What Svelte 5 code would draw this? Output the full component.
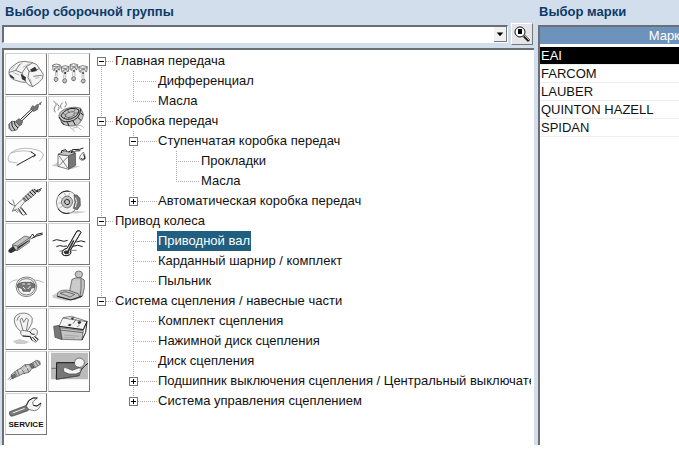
<script lang="ts">
	type Shape = [cls: string, d: string];
	type Icon = { name: string; box: string; shapes: Shape[]; caption?: string };
	type TreeNode = { label: string; open?: boolean; children?: TreeNode[] };

	const icons: Icon[] = [
		{
			name: 'Кузов',
			box: '18 27 120 117',
			shapes: [
				['pale', 'M27 86 Q25 70 42 61 Q52 49 72 49 L94 52 Q112 55 118 70 L130 88 Q130 103 116 113 L98 125 Q85 122 78 112 L64 111 L44 105 Q29 99 27 86Z'],
				['line', 'M28 82 L47 76 L60 57 M47 76 L66 84 L79 65 L98 53 M66 84 L78 112 M79 65 L87 79 L106 78 L118 70 M87 79 L84 98 L98 125 M100 94 L125 91'],
				['ink', 'M90 74 L105 65 L112 76 L96 81Z M62 86 L78 97 L76 108 L66 103Z M29 87 L44 99 L41 102 L31 96Z'],
				['thin', 'M34 75 L45 64 M52 66 L67 53 M40 83 L58 90 M69 67 L88 56 M90 101 L94 114 M105 100 L118 98']
			]
		},
		{
			name: 'Двигатель',
			box: '147 27 120 117',
			shapes: [
				['pale', 'M158 60 Q169 54 181 60 L179 75 L176 75 L174 68 L164 70 L163 77 L159 75Z M184 65 Q195 59 207 65 L205 80 L202 80 L200 73 L190 75 L189 82 L185 80Z M210 59 Q221 53 233 59 L231 74 L228 74 L226 67 L216 69 L215 76 L211 74Z M236 65 Q248 59 262 65 L260 80 L257 80 L254 73 L243 75 L242 82 L238 80Z'],
				['thin', 'M167 71 L166 95 M172 71 L171 95 M193 76 L191 99 M198 76 L197 99 M219 70 L218 93 M224 70 L225 94 M246 76 L246 100 M251 76 L252 100'],
				['line', 'M158 63 Q168 68 180 63 M184 68 Q195 73 206 68 M210 62 Q221 67 232 62 M236 68 Q248 73 262 68'],
				['mid', 'M164 98 Q173 94 174 102 Q173 112 165 109 Q160 104 164 98Z M190 102 Q199 98 200 107 Q199 116 191 114 Q185 108 190 102Z M217 96 Q226 92 227 101 Q225 110 218 107 Q212 103 217 96Z M246 103 Q255 99 256 107 Q253 117 247 114 Q240 109 246 103Z'],
				['ink', 'M168 76 H172 V82 H168Z M193 81 H198 V87 H193Z M220 75 H224 V81 H220Z M247 81 H251 V87 H247Z']
			]
		},
		{
			name: 'Привод',
			box: '18 156 120 117',
			shapes: [
				['heavy', 'M61 224 L100 187 M65 228 L104 191 M113 182 L125 171'],
				['dark', 'M92 190 L98 182 L104 185 L112 178 L115 184 L113 193 L104 198 L99 199Z M47 229 L57 221 L68 229 L64 240 L55 243Z'],
				['mid', 'M27 237 L35 229 L46 229 L58 242 L50 255 L35 258 L27 250Z'],
				['heavy', 'M35 229 Q33 244 45 256 M43 229 Q42 240 54 249'],
				['line', 'M27 237 Q27 249 35 258 M120 173 L122 180']
			]
		},
		{
			name: 'Сцепление',
			box: '147 156 120 117',
			shapes: [
				['mid', 'M177 216 Q175 202 193 193 Q220 182 242 190 L250 207 Q249 228 232 240 Q206 248 187 236Z'],
				['heavy', 'M177 216 Q185 233 207 230 Q240 225 242 192 M183 213 Q188 198 210 191 Q229 187 237 195 Q236 214 212 222 Q194 226 183 213Z'],
				['line', 'M195 213 Q200 200 220 200 Q229 207 214 216 Q202 220 195 213Z M187 204 L198 210 M202 194 L207 203 M226 191 L222 200 M237 202 L226 205 M229 216 L220 211 M205 225 L207 216 M191 219 L199 213'],
				['heavy', 'M184 230 L193 240 M202 232 L207 243 M219 228 L226 240 M234 218 L243 226 M242 204 L250 210'],
				['line', 'M166 202 Q159 193 165 185 Q174 177 160 168 M174 196 Q182 184 170 175 M185 191 Q177 182 188 173 M194 187 Q204 180 196 169'],
				['thin', 'M218 250 Q233 242 243 255 M228 245 Q242 236 251 248 M210 248 Q219 250 224 260']
			]
		},
		{
			name: 'Стеклоочиститель',
			box: '18 12 120 117',
			shapes: [
				['thin', 'M27 80 Q20 69 32 54 Q57 35 93 41 Q126 46 130 59 Q129 71 117 79 M32 54 Q69 42 98 52 M27 80 L52 84'],
				['heavy', 'M50 91 L106 60 M92 50 L107 60 L100 66']
			]
		},
		{
			name: 'Масла и жидкости',
			box: '147 12 120 117',
			shapes: [
				['shade', 'M155 92 L175 82 L222 92 L242 94 L215 102Z'],
				['pale', 'M174 58 L206 62 L206 103 L174 94Z'],
				['dark', 'M206 62 L226 54 L227 91 L206 103Z'],
				['mid', 'M174 58 L193 48 L226 54 L206 62Z'],
				['line', 'M177 62 L203 99 M203 66 L177 92'],
				['heavy', 'M184 54 L185 47 L197 44 L201 50 M205 51 L213 47 L222 51'],
				['heavy', 'M214 54 L217 44 L239 43 L250 39 M222 52 L227 48 L241 47'],
				['pale', 'M250 51 Q237 64 238 71 Q243 78 252 75 Q260 68 250 51Z'],
				['heavy', 'M242 70 Q247 76 255 70 L251 58']
			]
		},
		{
			name: 'Амортизация',
			box: '18 141 120 117',
			shapes: [
				['mid', 'M68 191 L98 163 L108 171 L113 163 L104 179 L75 201Z'],
				['heavy', 'M76 182 L86 194 M82 176 L94 188 M89 170 L101 182 M96 165 L108 177 M102 162 L114 171 M70 188 L80 198'],
				['heavy', 'M109 169 L125 160 M114 172 L123 164'],
				['pale', 'M50 208 L68 192 L75 199 L60 218 L78 237 L70 241 L50 223 L37 229 L43 216Z'],
				['line', 'M24 197 L32 207 L47 213 M38 194 L44 209 M27 202 L37 209 M43 224 L54 233'],
				['heavy', 'M55 220 L67 239 M63 217 L80 239']
			]
		},
		{
			name: 'Тормоза',
			box: '147 141 120 117',
			shapes: [
				['shade', 'M189 229 L228 228 L261 230 L228 236Z'],
				['pale', 'M200 168 Q226 167 232 200 Q230 235 202 236 Q171 234 169 201 Q173 170 200 168Z'],
				['heavy', 'M176 181 Q188 165 208 169 M174 221 Q187 240 208 234'],
				['mid', 'M201 183 Q216 185 218 200 Q215 218 201 219 Q186 216 184 201 Q187 185 201 183Z'],
				['heavy', 'M200 193 Q209 193 209 202 Q207 211 199 209 Q192 204 194 197Z'],
				['thin', 'M175 204 L184 204 M178 186 L188 192 M192 173 L197 182 M210 174 L206 182 M178 219 L188 213'],
				['dark', 'M222 180 L231 180 L240 190 L241 212 L232 224 L220 220 L225 202Z'],
				['white', 'M226 188 L230 200 L226 216']
			]
		},
		{
			name: 'Выпуск',
			box: '18 12 120 117',
			shapes: [
				['mid', 'M37 74 L74 48 L91 52 L88 67 L52 92 L38 86Z'],
				['line', 'M38 75 L53 78 L88 54 M53 78 L52 92 M38 86 L26 91 L30 98 L49 90'],
				['ink', 'M27 88 L40 78 L48 91 L34 99 L25 96Z M54 80 L87 60 L86 64 L54 87Z'],
				['heavy', 'M90 53 Q95 45 98 42 L104 52 L110 43 L128 39 M94 56 L107 49 L128 43']
			]
		},
		{
			name: 'Охлаждение',
			box: '147 12 120 117',
			shapes: [
				['pale', 'M231 33 Q240 29 243 37 L211 91 Q217 104 201 107 Q183 108 187 94 Q193 85 201 85Z'],
				['heavy', 'M231 33 Q240 29 243 37 L211 91 Q217 104 201 107 Q183 108 187 94 Q193 85 201 85Z'],
				['ink', 'M191 95 Q196 90 202 92 L219 60 L223 62 L207 94 Q211 101 201 103 Q191 102 191 95Z'],
				['heavy', 'M158 63 Q169 56 180 61 Q192 67 203 61 M229 66 Q243 59 256 66 M169 80 Q179 74 190 79 L201 78 M219 79 Q232 72 248 80'],
				['line', 'M178 94 L190 91 M213 91 L230 91']
			]
		},
		{
			name: 'Рулевое управление',
			box: '18 141 120 117',
			shapes: [
				['thin', 'M28 190 Q39 178 56 180 M102 180 Q119 180 131 188'],
				['pale', 'M79 171 Q107 171 110 200 Q107 228 79 230 Q51 228 48 200 Q51 172 79 171Z'],
				['line', 'M79 176 Q102 176 105 200 Q103 223 79 225 Q56 223 53 200 Q56 176 79 176Z'],
				['dark', 'M53 193 L67 187 L93 187 L105 194 L104 202 L93 205 L90 214 L69 214 L65 205 L53 202Z'],
				['white', 'M67 192 L75 192 M82 192 L91 192 M69 201 L76 208 M83 207 L92 198']
			]
		},
		{
			name: 'Салон',
			box: '147 141 120 117',
			shapes: [
				['shade', 'M157 226 L180 216 L229 237 L198 243 L159 233Z'],
				['line', 'M233 172 L231 180 M241 172 L241 180'],
				['mid', 'M236 153 Q247 153 248 163 Q247 174 236 174 Q226 173 225 163 Q226 153 236 153Z'],
				['mid', 'M216 178 Q227 171 243 174 L253 180 Q256 203 248 226 L240 233 L208 216Z'],
				['shade', 'M219 182 L240 181 L238 218 L213 210Z'],
				['mid', 'M173 218 Q184 208 206 211 L234 221 L240 232 Q226 240 212 239 L172 229Z'],
				['line', 'M243 176 Q245 206 240 231 M180 220 L196 215 L224 223 L211 231Z'],
				['heavy', 'M172 229 L212 240 L247 228']
			]
		},
		{
			name: 'Освещение',
			box: '18 27 120 117',
			shapes: [
				['shade', 'M38 124 L59 117 L88 125 L75 132 L49 132Z'],
				['pale', 'M44 69 Q38 47 61 40 Q88 36 97 55 Q99 69 88 84 L77 99 L61 93 Q48 84 44 69Z'],
				['line', 'M70 95 L60 59 L66 54 L71 67 L79 54 L85 59 L79 92 M51 62 Q52 51 61 47'],
				['pale', 'M62 95 Q66 88 74 92 L90 95 Q98 82 106 86 Q117 92 111 103 L106 109 L116 118 L107 127 L96 121 L92 109 L68 108 Q60 103 62 95Z'],
				['heavy', 'M68 108 L90 110 L96 121 M90 95 Q92 105 104 103 M97 111 L109 124 M103 109 L114 119']
			]
		},
		{
			name: 'Электрика',
			box: '147 27 120 117',
			shapes: [
				['dark', 'M161 79 L178 76 L186 119 L165 112Z'],
				['pale', 'M177 79 L189 53 L214 49 L261 64 L250 89Z'],
				['mid', 'M180 83 L250 92 L246 120 L187 118Z'],
				['heavy', 'M177 79 L250 89 L261 64 L257 97 L246 120'],
				['line', 'M189 54 L260 65 M181 90 L249 98'],
				['ink', 'M202 76 L209 71 L215 74 L210 79Z M232 65 L241 63 L244 69 L236 73Z M212 53 L224 52 L217 60Z'],
				['line', 'M219 71 L228 58 M231 81 L239 75'],
				['thin', 'M193 105 L238 109 M193 112 L225 114']
			]
		},
		{
			name: 'Зажигание',
			box: '18 156 120 117',
			shapes: [
				['mid', 'M33 225 L50 211 L61 205 L75 194 L91 193 L109 181 L119 184 L121 193 L106 203 L97 204 L87 217 L67 222 L53 229 L37 236Z'],
				['line', 'M24 239 L37 225 M29 240 L39 233 M44 215 L52 229 M51 210 L58 225 M63 205 L74 221 M75 194 L87 216 M91 193 L98 204 M98 188 L106 203 M105 184 L113 197 M112 182 L120 193'],
				['dark', 'M35 228 L44 222 L47 229 L38 236Z M88 194 L95 190 L102 202 L96 205Z'],
				['white', 'M58 214 L68 208 M75 206 L86 201']
			]
		},
		{
			name: 'Навесное',
			box: '147 156 120 117',
			shapes: [
				['backdrop', 'M153 158 H264 V238 H153Z'],
				['panel', 'M170 188 L224 188 L244 210 L238 227 L169 238Z'],
				['pale', 'M237 174 Q252 175 253 188 Q252 201 238 202 Q224 201 223 188 Q224 175 237 174Z'],
				['pale', 'M190 207 Q193 198 202 205 L217 211 L236 204 L247 205 L241 216 L228 222 L207 222 L192 216Z'],
				['line', 'M154 205 L168 205 M169 238 L238 227'],
				['heavy', 'M169 238 L170 188 L224 188 M240 212 L255 197 L264 190']
			]
		},
		{
			name: 'Сервис',
			box: '18 282 120 72',
			caption: 'SERVICE',
			shapes: [
				['dark', 'M29 335 L79 316 L90 324 L84 332 L39 348 Q26 351 29 335Z'],
				['pale', 'M78 317 L86 302 Q99 290 112 294 L98 306 L100 316 L111 318 L123 309 Q119 331 103 332 L87 329Z'],
				['heavy', 'M79 317 L86 302 Q99 290 112 294 M100 316 L111 318 L123 309'],
				['white', 'M38 339 L74 325']
			]
		}
	];

	const tree: TreeNode[] = [
		{
			label: 'Главная передача',
			open: true,
			children: [{ label: 'Дифференциал' }, { label: 'Масла' }]
		},
		{
			label: 'Коробка передач',
			open: true,
			children: [
				{
					label: 'Ступенчатая коробка передач',
					open: true,
					children: [{ label: 'Прокладки' }, { label: 'Масла' }]
				},
				{ label: 'Автоматическая коробка передач', open: false }
			]
		},
		{
			label: 'Привод колеса',
			open: true,
			children: [
				{ label: 'Приводной вал' },
				{ label: 'Карданный шарнир / комплект' },
				{ label: 'Пыльник' }
			]
		},
		{
			label: 'Система сцепления / навесные части',
			open: true,
			children: [
				{ label: 'Комплект сцепления' },
				{ label: 'Нажимной диск сцепления' },
				{ label: 'Диск сцепления' },
				{ label: 'Подшипник выключения сцепления / Центральный выключатель', open: false },
				{ label: 'Система управления сцеплением', open: false }
			]
		}
	];

	const brands = ['EAI', 'FARCOM', 'LAUBER', 'QUINTON HAZELL', 'SPIDAN'];

	let selectedGroup = $state('Приводной вал');
	let selectedBrand = $state('EAI');
</script>

{#snippet branch(nodes: TreeNode[])}
	<ul>
		{#each nodes as node}
			<li>
				<div class="row">
					{#if node.open !== undefined}
						<button class="toggle" aria-label={node.label} aria-expanded={node.open}>
							<svg viewBox="0 0 9 9" width="9" height="9">
								<path d={node.open ? 'M2 4.5H7' : 'M2 4.5H7M4.5 2V7'} />
							</svg>
						</button>
					{/if}
					<span class="stub"></span>
					<button
						class="label"
						class:selected={node.label === selectedGroup}
						onclick={() => (selectedGroup = node.label)}>{node.label}</button
					>
				</div>
				{#if node.children}
					{@render branch(node.children)}
				{/if}
			</li>
		{/each}
	</ul>
{/snippet}

<main>
	<section class="groups">
		<h2><label for="group">Выбор сборочной группы</label></h2>
		<div class="search">
			<div class="combo">
				<select id="group"><option value=""></option></select>
				<svg class="arrow" viewBox="0 0 13 15" width="13" height="15" aria-hidden="true">
					<path d="M3 6H10L6.5 10Z" />
				</svg>
			</div>
			<button class="find" aria-label="Найти">
				<svg viewBox="0 0 18 18" width="18" height="18">
					<circle cx="7" cy="7" r="5" />
					<path class="glass" d="M5 4H9V9H5Z" />
					<path class="handle" d="M11 11L16 16" />
					<path class="shine" d="M11.5 10.5L16 15" />
				</svg>
			</button>
		</div>
		<div class="browser">
			<div class="palette">
				{#each icons as icon}
					<button aria-label={icon.name}>
						<svg class:short={icon.caption} viewBox={icon.box}>
							{#each icon.shapes as [cls, d]}
								<path class={cls} {d} />
							{/each}
						</svg>
						{#if icon.caption}<span>{icon.caption}</span>{/if}
					</button>
				{/each}
			</div>
			<nav class="tree">
				{@render branch(tree)}
			</nav>
		</div>
	</section>

	<section class="brands">
		<h2>Выбор марки</h2>
		<div class="list">
			<table>
				<thead>
					<tr><th>Марка</th></tr>
				</thead>
				<tbody>
					{#each brands as brand}
						<tr class:selected={brand === selectedBrand} onclick={() => (selectedBrand = brand)}>
							<td>{brand}</td>
						</tr>
					{/each}
				</tbody>
			</table>
		</div>
	</section>
</main>

<style>
	:global(body) {
		background: #fff;
	}

	main {
		display: grid;
		grid-template-columns: minmax(0, 1fr) 141px;
		gap: 4px;
		box-sizing: border-box;
		min-height: calc(100vh - 5px);
		padding-left: 2px;
		background: #d3deed;
		color: #111;
		font-family: 'Liberation Sans', Arial, sans-serif;
		font-size: 13px;
	}

	button,
	select {
		box-sizing: border-box;
		margin: 0;
		padding: 0;
		border: 0;
		border-radius: 0;
		background: none;
		color: inherit;
		font: inherit;
	}

	h2 {
		margin: 0;
		padding-left: 3px;
		color: #0c3a68;
		font-size: 13px;
		line-height: 24px;
	}

	section {
		display: flex;
		flex-direction: column;
		min-width: 0;
	}

	.brands {
		overflow: hidden;
	}

	.brands h2 {
		padding-left: 1px;
	}

	.search {
		display: flex;
		align-items: center;
		gap: 3px;
		height: 20px;
		padding-right: 1px;
	}

	.combo {
		position: relative;
		flex: 1;
		height: 18px;
		box-sizing: border-box;
		border: 1px solid #fff;
		border-top: 2px solid #6b6f75;
		border-left: 2px solid #6b6f75;
		background: #fff;
	}

	.combo select {
		display: block;
		width: 100%;
		height: 15px;
		appearance: none;
	}

	.arrow {
		position: absolute;
		top: 0;
		right: 0;
		box-sizing: border-box;
		border-right: 1px solid #777;
		border-bottom: 1px solid #777;
		background: #f0f1f2;
		pointer-events: none;
	}

	.find {
		width: 22px;
		height: 22px;
		padding: 1px;
		border: 1px solid #fff;
		border-right-color: #777;
		border-bottom-color: #777;
		background: #e4e5e8;
	}

	.find svg {
		display: block;
	}

	.find circle {
		fill: #fff;
		stroke: #111;
	}

	.handle {
		stroke: #222;
		stroke-width: 3;
	}

	.shine {
		stroke: #bbb;
	}

	.browser {
		display: flex;
		flex: 1;
		margin-top: 4px;
		border-top: 2px solid #6b6f75;
		border-left: 2px solid #6b6f75;
		background: #fff;
	}

	.palette {
		display: grid;
		grid-template-columns: 42px 42px;
		grid-auto-rows: 42px 41px;
		gap: 1px;
		align-content: start;
		padding: 3px 7px 10px 1px;
	}

	.palette button {
		display: flex;
		flex-direction: column;
		align-items: center;
		overflow: hidden;
		border: 1px solid #d2d2d2;
		border-right-color: #777;
		border-bottom-color: #777;
		background: #fdfdfd;
	}

	.palette svg {
		flex: none;
		width: 40px;
		height: 39px;
	}

	.palette svg.short {
		height: 24px;
	}

	.palette span {
		font-size: 8px;
		font-weight: bold;
		line-height: 14px;
	}

	.palette path {
		fill: none;
		stroke: #444;
		stroke-width: 2;
	}

	.palette .pale {
		fill: #f4f4f4;
	}

	.palette .mid {
		fill: #c4c4c4;
	}

	.palette .dark {
		fill: #777;
	}

	.palette .ink {
		fill: #333;
		stroke: none;
	}

	.palette .heavy {
		stroke: #222;
		stroke-width: 3;
	}

	.palette .thin {
		stroke: #999;
	}

	.palette .white {
		stroke: #eee;
		stroke-width: 3;
	}

	.palette .shade {
		fill: #ccc;
		stroke: none;
	}

	.palette .backdrop {
		fill: #bbb;
		stroke: none;
	}

	.palette .panel {
		fill: #777;
	}

	.tree {
		flex: 1;
		min-width: 0;
		overflow: hidden;
		margin-right: 3px;
		padding-top: 1px;
	}

	ul {
		margin: 0;
		padding: 0;
		list-style: none;
	}

	/* dotted guide runs down through the centre of the toggles */
	li {
		background: repeating-linear-gradient(#aaa 0 1px, transparent 1px 2px) 4px 0 / 1px 100% no-repeat;
	}

	li:last-child {
		background-size: 1px 10px;
	}

	.tree > ul > li:first-child {
		background-position: 4px 10px;
	}

	ul ul {
		padding-left: 32px;
	}

	ul ul ul {
		padding-left: 43px;
	}

	.row {
		display: flex;
		align-items: center;
		height: 20px;
	}

	.toggle {
		flex: none;
		width: 9px;
		height: 9px;
		outline: 1px solid #777;
		outline-offset: -1px;
		background: #fff;
	}

	.toggle svg {
		display: block;
	}

	.toggle path {
		stroke: #000;
	}

	.stub {
		flex: none;
		width: 8px;
		height: 1px;
		background: repeating-linear-gradient(90deg, #aaa 0 1px, transparent 1px 2px);
	}

	ul ul .stub {
		width: 19px;
	}

	ul ul .stub:first-child {
		width: 24px;
		margin-left: 4px;
	}

	.label {
		padding: 0 1px;
		line-height: 20px;
		white-space: nowrap;
	}

	.label.selected {
		background: #215f80;
		color: #fff;
	}

	.list {
		flex: 1;
		margin-top: 1px;
		border-top: 2px solid #6b6f75;
		border-left: 2px solid #6b6f75;
		background: #fff;
	}

	table {
		width: 256px;
		border-collapse: collapse;
	}

	th {
		height: 17px;
		padding: 0;
		border-bottom: 3px solid #fff;
		background: #6d93bd;
		color: #fff;
		font-weight: normal;
		line-height: 17px;
	}

	td {
		height: 17px;
		padding: 0 1px;
		border-bottom: 1px solid #eee;
		line-height: 17px;
	}

	tr.selected td {
		background: #000;
		color: #fff;
	}
</style>
